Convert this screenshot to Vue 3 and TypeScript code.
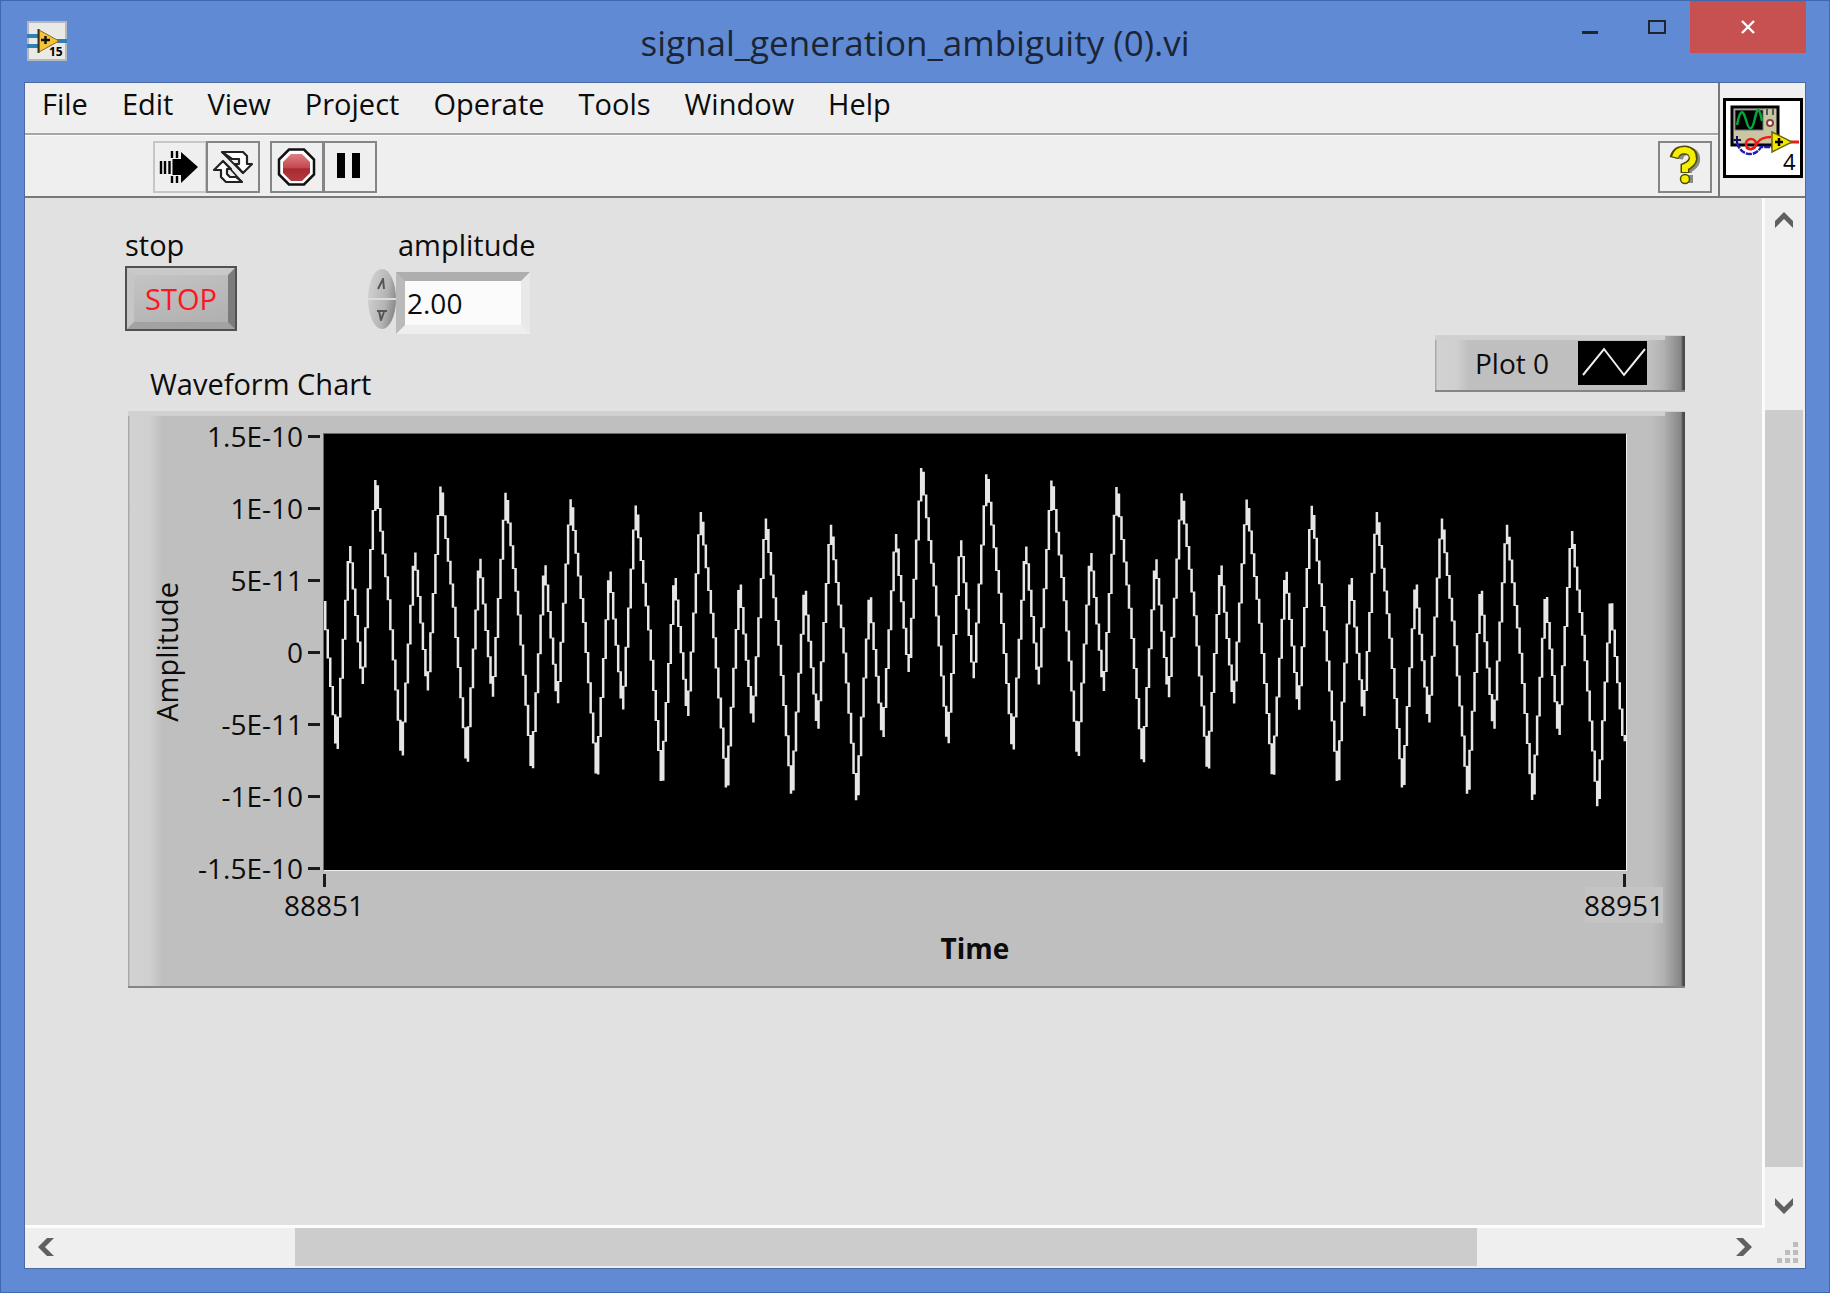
<script setup lang="ts">
import { computed, ref } from 'vue'

const menus: string[] = ['File', 'Edit', 'View', 'Project', 'Operate', 'Tools', 'Window', 'Help']
const yTicks: string[] = ['1.5E-10', '1E-10', '5E-11', '0', '-5E-11', '-1E-10', '-1.5E-10']
const xTicks: string[] = ['88851', '88951']

const amplitude = ref('2.00')

// Plot space, in screen units of the chart: one sample every STEP.
const PLOT_W = 1300
const PLOT_H = 436
const STEP = 12.98
const CELL = 2.5

// One period of the aliased signal, relative to its highest point.
const CYCLE: number[] = [268, 66, 203, 0, 118]

function train(top: number, drift: number, count: number): number[] {
  return Array.from({ length: count }, (_, i) => top + drift * Math.floor(i / 5) + CYCLE[i % 5])
}

const samples: number[] = [167, ...train(46, 6.4, 42), ...train(34, 6.3, 58)]

function valueAt(x: number): number {
  const t = Math.min(Math.max(x / STEP, 0), samples.length - 1)
  const i = Math.min(Math.floor(t), samples.length - 2)
  return samples[i] + (samples[i + 1] - samples[i]) * (t - i)
}

// The trace is drawn without smoothing: one vertical run per column of cells.
const trace = computed<string>(() => {
  const parts: string[] = []
  for (let c = 0; c * CELL < STEP * (samples.length - 1); c++) {
    const from = c * CELL
    const to = from + CELL
    const ys = [valueAt(from), valueAt(to)]
    const turn = Math.ceil(from / STEP)
    if (turn * STEP < to && turn < samples.length) ys.push(samples[turn])
    parts.push(`M${from + CELL / 2} ${Math.min(...ys).toFixed(1)}V${(Math.max(...ys) + 1).toFixed(1)}`)
  }
  return parts.join('')
})
</script>

<template>
  <div class="window">
    <header class="titlebar">
      <svg class="app-icon" viewBox="0 0 40 40" aria-hidden="true">
        <rect x="1" y="1" width="38" height="38" fill="#e9e9e6" stroke="#b5b9bd" stroke-width="2" />
        <path d="M0 15H12M0 25H12M30 20H40" stroke="#2f7fb5" stroke-width="4" />
        <path d="M12 9L32 20L12 31Z" fill="#f6c437" stroke="#8b6a1c" stroke-width="1" />
        <path d="M11.500 8V32" stroke="#3a3220" stroke-width="2" />
        <path d="M14 19H23M18.500 15V23" stroke="#111" stroke-width="2.400" />
        <text x="22" y="35" class="icon-num small">15</text>
      </svg>
      <h1 class="title">signal_generation_ambiguity (0).vi</h1>
      <div class="controls">
        <button type="button" class="ctl" aria-label="Minimize">
          <svg viewBox="0 0 18 16"><path d="M1 13.500H17" stroke="#1e2430" stroke-width="3" /></svg>
        </button>
        <button type="button" class="ctl" aria-label="Maximize">
          <svg viewBox="0 0 18 16"><rect x="1" y="2" width="16" height="12" fill="none" stroke="#1e2430" stroke-width="2" /></svg>
        </button>
        <button type="button" class="ctl close" aria-label="Close">
          <svg viewBox="0 0 18 16"><path d="M3 2L15 14M15 2L3 14" stroke="#fff" stroke-width="2.400" /></svg>
        </button>
      </div>
    </header>

    <div class="client">
      <div class="top">
        <div class="bars">
          <nav class="menubar">
            <button v-for="m in menus" :key="m" type="button" class="menu">{{ m }}</button>
          </nav>
          <div class="toolbar">
            <button type="button" class="tool pale" aria-label="Run">
              <svg viewBox="0 0 50 48">
                <path d="M19 16H26V9L43 24L26 40V32H19Z" fill="#000" />
                <path d="M6 18V31M10 18V31M14.500 18V31M17 8V15M22 8V15M17 33V40M22 33V40" stroke="#000" stroke-width="2.400" />
                <path d="M19 16V32" stroke="#000" stroke-width="3" />
              </svg>
            </button>
            <button type="button" class="tool joined" aria-label="Run continuously">
              <svg viewBox="0 0 50 48" fill="#fff" stroke="#222" stroke-width="2.200" stroke-linejoin="round">
                <path d="M14 9H35L39 13V21H44L35 30L27 21H31V16H24Z" />
                <path d="M34 39H18L13 34V27H6L15 18L23 26H19V31L22 34H28Z" />
                <path d="M14 9L35 30M16 19L34 39" stroke-width="1.800" />
              </svg>
            </button>
            <button type="button" class="tool apart" aria-label="Abort execution">
              <svg viewBox="0 0 50 48">
                <defs>
                  <linearGradient id="abortFill" x1="0" y1="0" x2="0" y2="1">
                    <stop offset="0" stop-color="#dd8085" />
                    <stop offset="0.500" stop-color="#c4494f" />
                    <stop offset="0.550" stop-color="#a92a31" />
                    <stop offset="1" stop-color="#b23a40" />
                  </linearGradient>
                </defs>
                <path d="M17 6.500H32L42 16.500V31.500L32 41.500H17L7 31.500V16.500Z" fill="#fff" stroke="#111" stroke-width="2.500" />
                <path d="M19 11H30L38 19V30L30 38H19L11 30V19Z" fill="url(#abortFill)" />
              </svg>
            </button>
            <button type="button" class="tool joined" aria-label="Pause">
              <svg viewBox="0 0 50 48"><path d="M12 10H20V35H12ZM27 10H35V35H27Z" fill="#000" /></svg>
            </button>
            <button type="button" class="tool help" aria-label="Context help">
              <svg viewBox="0 0 50 48" fill="none">
                <g stroke="#8a8a8a" stroke-width="8"><path d="M19 16Q20 8 28 8Q37 9 36 18Q35 23 28 26V30" /><path d="M24 36H33" /></g>
                <g stroke="#4d4a00" stroke-width="9"><path d="M14 15Q16 7 25 7Q34 8 33 16Q32 21 25 24V30" /></g>
                <g stroke="#f6ee00" stroke-width="6"><path d="M15 14Q17 7 25 7Q33 8 33 16Q32 21 25 24V29" /></g>
                <circle cx="25" cy="36" r="4.500" fill="#f6ee00" stroke="#4d4a00" stroke-width="1.500" />
              </svg>
            </button>
          </div>
        </div>
        <div class="vi-pane">
          <svg class="vi-icon" viewBox="0 0 80 80" aria-hidden="true">
            <rect x="1.500" y="1.500" width="77" height="77" fill="#fff" stroke="#000" stroke-width="3" />
            <rect x="9" y="9" width="46" height="38" fill="#c9c6a2" stroke="#000" stroke-width="3" />
            <rect x="12" y="12" width="28" height="20" fill="#000" stroke="#77778a" stroke-width="1" />
            <path d="M14 27C17 11 20 11 23 22S29 34 32 20S37 13 39 23" fill="none" stroke="#00a838" stroke-width="2.500" />
            <path d="M44 11V17M50 11V17" stroke="#55555a" stroke-width="2" />
            <circle cx="47" cy="25" r="3" fill="#fff" stroke="#8a4040" stroke-width="2" />
            <path d="M14 38V45M10.500 42H18" stroke="#10106a" stroke-width="2" />
            <path d="M14 45Q18 56 27 56Q34 56 38 49H50" fill="none" stroke="#1a1ab8" stroke-width="2.500" stroke-dasharray="6 1" />
            <path d="M23 49Q29 55 34 45Q38 39 48 39" fill="none" stroke="#f01818" stroke-width="2.500" />
            <circle cx="28" cy="46" r="5" fill="none" stroke="#f01818" stroke-width="2.500" />
            <path d="M66 44H76" stroke="#f01818" stroke-width="3" />
            <path d="M49 34L69 44L49 54Z" fill="#f4e800" stroke="#6e6800" stroke-width="1.500" />
            <path d="M52 44H60M56 40V48" stroke="#000" stroke-width="2.500" />
            <text x="60" y="72" class="icon-num">4</text>
          </svg>
        </div>
      </div>

      <div class="work">
        <main class="panel">
          <div class="inputs">
            <div class="field stop-field">
              <label class="caption" for="stop">stop</label>
              <button id="stop" type="button" class="stop">STOP</button>
            </div>
            <div class="field amp-field">
              <label class="caption amp-caption" for="amplitude">amplitude</label>
              <div class="numeric">
                <div class="spinner">
                  <button type="button" aria-label="Increase"><svg viewBox="0 0 12 12"><path d="M2 11L7 1L8 11" /></svg></button>
                  <button type="button" aria-label="Decrease"><svg viewBox="0 0 12 12"><path d="M1 2H11M3 2L5 11L8 3" /></svg></button>
                </div>
                <input id="amplitude" v-model="amplitude" type="text" class="value" />
              </div>
            </div>
          </div>

          <div class="chart-head">
            <h2 class="caption chart-title">Waveform Chart</h2>
            <div class="legend bevel">
              <span>Plot 0</span>
              <svg class="swatch" viewBox="0 0 69 44"><path d="M5 34L26 8L46 34L67 8" fill="none" stroke="#eee" stroke-width="2" /></svg>
            </div>
          </div>

          <section class="chart bevel">
            <div class="y-name"><span>Amplitude</span></div>
            <ol class="y-axis">
              <li v-for="t in yTicks" :key="t">{{ t }}</li>
            </ol>
            <svg class="plot" :viewBox="`0 0 ${PLOT_W} ${PLOT_H}`" preserveAspectRatio="none">
              <path :d="trace" fill="none" stroke="#e6e6e6" :stroke-width="CELL" />
            </svg>
            <div class="x-axis">
              <ol class="x-ticks">
                <li v-for="t in xTicks" :key="t">{{ t }}</li>
              </ol>
              <div class="x-name">Time</div>
            </div>
          </section>
        </main>

        <div class="vscroll">
          <button type="button" class="arrow" aria-label="Scroll up"><svg viewBox="0 0 18 18"><path d="M0 17V10L9 1L18 10V17L9 8Z" /></svg></button>
          <div class="track"><div class="thumb"></div></div>
          <button type="button" class="arrow" aria-label="Scroll down"><svg viewBox="0 0 18 18"><path d="M0 1V8L9 17L18 8V1L9 10Z" /></svg></button>
        </div>
        <div class="hscroll">
          <button type="button" class="arrow" aria-label="Scroll left"><svg viewBox="0 0 18 18"><path d="M17 0H10L1 9L10 18H17L8 9Z" /></svg></button>
          <div class="track"><div class="thumb"></div></div>
          <button type="button" class="arrow" aria-label="Scroll right"><svg viewBox="0 0 18 18"><path d="M1 0H8L17 9L8 18H1L10 9Z" /></svg></button>
        </div>
        <div class="grip">
          <svg viewBox="0 0 22 22" fill="#bdbdbd"><path d="M16 0h5v5h-5zM8 8h5v5h-5zM16 8h5v5h-5zM0 16h5v5h-5zM8 16h5v5h-5zM16 16h5v5h-5z" /></svg>
        </div>
      </div>
    </div>
  </div>
</template>

<style>
body {
  margin: 0;
}
</style>

<style scoped>
* {
  box-sizing: border-box;
}
.window {
  display: flex;
  flex-direction: column;
  min-height: 100vh;
  padding: 0 23px 23px;
  border: 1px solid #3f68ae;
  background: #618ad5;
  color: #0c0c0c;
  font-family: 'Open Sans', 'Noto Sans', sans-serif;
  font-size: 28px;
  line-height: 36px;
}
button {
  padding: 0;
  border: 0;
  background: none;
  color: inherit;
  font: inherit;
}
svg {
  display: block;
}
ol {
  margin: 0;
  padding: 0;
  list-style: none;
}

/* title bar */
.titlebar {
  display: grid;
  grid-template-columns: 1fr auto 1fr;
  height: 81px;
}
.app-icon {
  width: 40px;
  height: 40px;
  margin: 20px 0 0 3px;
}
.icon-num {
  font-family: 'Open Sans', sans-serif;
  font-size: 22px;
}
.icon-num.small {
  font-size: 12px;
  font-weight: 700;
}
.title {
  margin: 18px 0 0;
  color: #1b2535;
  font-size: 35px;
  font-weight: 400;
  line-height: 48px;
}
.controls {
  display: flex;
  justify-content: flex-end;
}
.ctl {
  display: flex;
  justify-content: center;
  align-items: center;
  width: 67px;
  height: 52px;
}
.ctl svg {
  width: 18px;
  height: 16px;
}
.ctl.close {
  width: 116px;
  background: #c75050;
}

/* menu and toolbar */
.client {
  display: flex;
  flex: 1;
  flex-direction: column;
  border: 1px solid #4a6aa6;
  background: #efefef;
}
.top {
  display: flex;
  border-bottom: 2px solid #777;
}
.bars {
  flex: 1;
}
.menubar {
  display: flex;
  gap: 34px;
  height: 52px;
  padding: 3px 17px 0;
  border-bottom: 2px solid #a6a6a6;
  font-size: 29px;
}
.menu {
  height: 36px;
}
.toolbar {
  display: flex;
  height: 61px;
  padding: 5px 6px 0 128px;
  border-top: 1px solid #fbfbfb;
}
.tool {
  width: 54px;
  height: 52px;
  border: 2px solid #858585;
}
.tool svg {
  width: 50px;
  height: 48px;
}
.tool.pale {
  border-color: #c6c6c6;
}
.tool.joined {
  margin-left: -1px;
}
.tool.apart {
  margin-left: 10px;
}
.tool.help {
  margin-left: auto;
}
.vi-pane {
  width: 87px;
  padding: 15px 0 0 3px;
  border-left: 2px solid #777;
}
.vi-icon {
  width: 80px;
  height: 80px;
}

/* front panel and scroll bars */
.work {
  display: grid;
  flex: 1;
  grid-template-rows: 1fr 40px;
  grid-template-columns: 1fr 40px;
}
.panel {
  padding: 29px 77px 28px 100px;
  border-right: 3px solid #fcfcfc;
  border-bottom: 3px solid #fcfcfc;
  background: #e1e1e1;
}
.vscroll {
  display: flex;
  flex-direction: column;
}
.hscroll {
  display: flex;
}
.arrow {
  display: flex;
  flex: none;
  justify-content: center;
  align-items: center;
}
.arrow svg {
  width: 18px;
  height: 18px;
  fill: #606060;
}
.track {
  display: grid;
  flex: 1;
}
.vscroll .arrow {
  width: 38px;
  height: 44px;
}
.vscroll .track {
  grid-template-rows: 168fr 758fr 17fr;
  width: 38px;
}
.vscroll .thumb {
  grid-row: 2;
}
.hscroll .arrow {
  width: 42px;
  height: 38px;
}
.hscroll .track {
  grid-template-columns: 228fr 1182fr 246fr;
  height: 38px;
}
.hscroll .thumb {
  grid-column: 2;
}
.thumb {
  background: #cccccc;
}
.grip {
  display: flex;
  justify-content: flex-end;
  align-items: flex-end;
  padding: 4px 6px;
}
.grip svg {
  width: 22px;
  height: 22px;
}

/* controls */
.inputs {
  display: flex;
  gap: 131px;
  height: 108px;
}
.caption {
  display: block;
  margin: 0;
  font-size: 29px;
  font-weight: 400;
  line-height: 36px;
}
.stop {
  display: block;
  width: 112px;
  height: 65px;
  margin-top: 3px;
  border: 9px solid;
  border-color: #c9c9c9 #7b7b7b #a2a2a2 #c6c6c6;
  outline: 2px solid #505050;
  outline-offset: -2px;
  background: linear-gradient(165deg, #c4c4c4, #b0b0b0);
  color: #ff1420;
  font-size: 29px;
  line-height: 44px;
}
.amp-caption {
  margin-left: 30px;
}
.numeric {
  display: flex;
  align-items: flex-start;
  margin-top: 6px;
}
.spinner {
  display: flex;
  flex-direction: column;
  width: 28px;
  height: 60px;
  overflow: hidden;
  border-radius: 50%;
  background: linear-gradient(100deg, #d6d6d6, #b4b4b4 60%, #777);
}
.spinner button {
  display: flex;
  flex: 1;
  justify-content: center;
  align-items: center;
}
.spinner button + button {
  border-top: 2px solid #dcdcdc;
}
.spinner svg {
  width: 12px;
  height: 12px;
  fill: none;
  stroke: #555;
  stroke-width: 2;
}
.value {
  width: 134px;
  height: 62px;
  margin: 3px 0 0;
  padding: 0 2px;
  border: 9px solid;
  border-color: #aeaeae #e9e9e9 #eeeeee #bababa;
  outline: 0;
  background: #fbfbfb;
  color: inherit;
  font: inherit;
}

/* chart */
.bevel {
  border-top: 1px solid #d2d2d2;
  border-bottom: 2px solid #858585;
  background:
    linear-gradient(#d0d0d0, #d0d0d0) 0 0 / calc(100% - 20px) 4px no-repeat,
    linear-gradient(90deg, #a8a8a8 0 1px, #d2d2d2 2px, #cfcfcf 22px, #bfbfbf 34px, rgba(191, 191, 191, 0) 34px),
    linear-gradient(270deg, #4a4a4a 0 2px, #858585 4px, #b2b2b2 22px, #bfbfbf 34px);
}
.chart-head {
  display: flex;
  justify-content: space-between;
  align-items: flex-start;
  height: 76px;
}
.chart-title {
  margin: 31px 0 0 25px;
}
.legend {
  display: flex;
  justify-content: space-between;
  width: 250px;
  height: 57px;
  padding: 5px 38px 0 40px;
  line-height: 44px;
}
.swatch {
  width: 69px;
  height: 44px;
  background: #000;
}
.chart {
  display: grid;
  grid-template-rows: 438px 1fr;
  grid-template-columns: 52px 140px 1fr;
  height: 577px;
  margin-left: 3px;
  padding: 21px 58px 0 3px;
}
.y-name {
  display: flex;
  justify-content: center;
  align-items: center;
  padding-left: 20px;
  font-size: 29px;
}
.y-name span {
  writing-mode: vertical-rl;
  transform: rotate(180deg);
}
.y-axis {
  display: flex;
  flex-direction: column;
  justify-content: space-between;
  margin: -15px 0;
  text-align: right;
}
.y-axis li {
  display: flex;
  gap: 5px;
  justify-content: flex-end;
  align-items: center;
  height: 36px;
  padding-right: 3px;
  white-space: nowrap;
}
.y-axis li::after {
  width: 12px;
  height: 3px;
  background: #1a1a1a;
  content: '';
}
.plot {
  width: 100%;
  height: 438px;
  border: 1px solid;
  border-color: #6a6a6a #eeeeee #eeeeee #6a6a6a;
  background: #000;
}
.x-axis {
  grid-column: 3;
}
.x-ticks {
  display: flex;
  justify-content: space-between;
  margin: 3px -36px 0 -38px;
}
.x-ticks li {
  display: flex;
  flex-direction: column;
  align-items: center;
  width: 78px;
}
.x-ticks li:last-child {
  background: linear-gradient(#c4c4c4, #c4c4c4) 0 100% / 100% 36px no-repeat;
}
.x-ticks li::before {
  width: 3px;
  height: 13px;
  background: #1a1a1a;
  content: '';
}
.x-name {
  margin-top: 7px;
  font-weight: 700;
  text-align: center;
}
</style>
